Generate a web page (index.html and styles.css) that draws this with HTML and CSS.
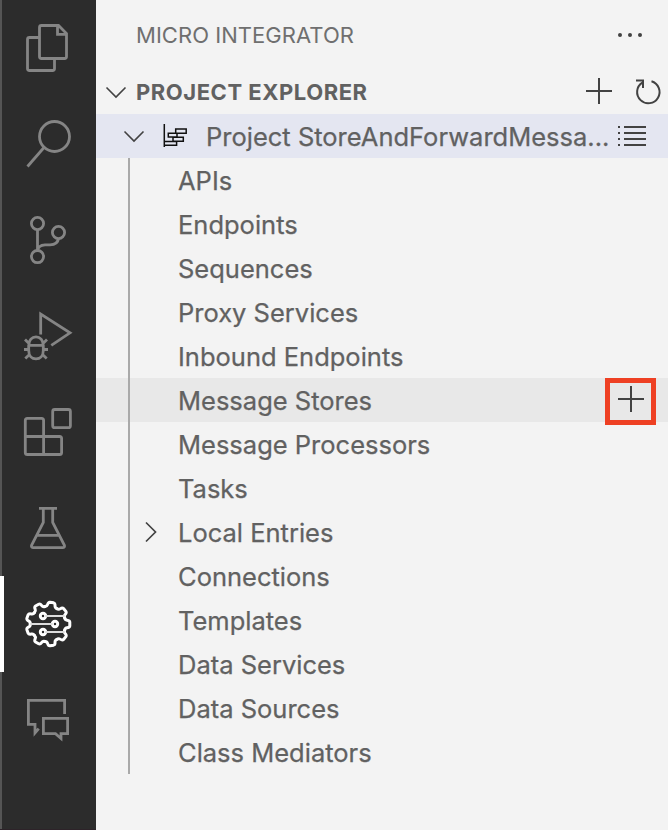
FILE: index.html
```html
<!DOCTYPE html>
<html lang="en">
<head>
<meta charset="utf-8">
<title>Micro Integrator</title>
<link rel="stylesheet" href="styles.css">
</head>
<body>
<div class="app">
  <nav class="activity">
    <div class="tool"><svg viewBox="0 0 96 96"><path d="M41.5 25.5H58.5L66.5 33.5V56.5Q66.5 58.5 64.500 58.5H41.500Q39.500 58.500 39.500 56.500V27.500Q39.500 25.500 41.500 25.500ZM57.500 26V34.300H66M39 37.500H29.500Q27.500 37.500 27.500 39.500V68.500Q27.500 70.500 29.500 70.500H52.500Q54.500 70.500 54.500 68.500V59"/></svg></div>
    <div class="tool"><svg viewBox="0 0 96 96"><circle cx="54.500" cy="40.500" r="15"/><path d="M44 51.500L27.500 70.500"/></svg></div>
    <div class="tool"><svg viewBox="0 0 96 96"><circle cx="37.500" cy="31.500" r="6.100"/><circle cx="58.500" cy="40.500" r="6.100"/><circle cx="37.500" cy="64.600" r="6.100"/><path d="M37.500 38V58.500C38 55 41 53 45 52.800H50C54.500 52.600 58 51 58.500 46.500"/></svg></div>
    <div class="tool"><svg viewBox="0 0 96 96"><path d="M40.700 46.500V26L70 44.800L51.300 57.300M28.700 57.300H43.300M28.700 60.500V57.500C28.700 52 32 48.800 36 48.800S43.300 52 43.300 57.500V62.500C43.300 68 40 70.800 36 70.800S28.700 68 28.700 62.500V57.500M29 55.500L25 51.500M43 55.500L47 51.500M28 61.500H24M44 61.500H48M29.500 66.500L25.300 70.500M42.500 66.500L46.700 70.500"/></svg></div>
    <div class="tool"><svg viewBox="0 0 96 96"><rect x="52.700" y="25.500" width="17.700" height="18.200" rx="2"/><path d="M43.600 52.500V36.500Q43.600 34.400 41.500 34.400H27.400Q25.300 34.400 25.300 36.500V68.400Q25.300 70.500 27.400 70.500H59.500Q61.600 70.500 61.600 68.400V54.600Q61.600 52.500 59.500 52.500H25.300M43.600 52.500V70.500"/></svg></div>
    <div class="tool"><svg viewBox="0 0 96 96"><path d="M39 28.300H57M43.300 28.300V42.300L31.700 65Q30.800 67.600 33.500 67.600H62.500Q65.200 67.600 64.300 65L52.700 42.300V28.300M37 55.400H59"/></svg></div>
    <div class="tool active"><svg viewBox="0 0 96 96">
      <defs><path id="tooth" d="M16.700 -6.080Q17.200 -4 19 -3.800Q21.700 -3.500 21.800 -1.800V1.800Q21.700 3.500 19 3.800Q17.200 4 16.700 6.080"/></defs>
      <g transform="translate(48 48)"><use href="#tooth"/><use href="#tooth" transform="rotate(40)"/><use href="#tooth" transform="rotate(80)"/><use href="#tooth" transform="rotate(120)"/><use href="#tooth" transform="rotate(160)"/><use href="#tooth" transform="rotate(200)"/><use href="#tooth" transform="rotate(240)"/><use href="#tooth" transform="rotate(280)"/><use href="#tooth" transform="rotate(320)"/></g>
      <circle cx="43" cy="40" r="2.700"/><circle cx="55" cy="48" r="2.700"/><circle cx="43" cy="56" r="2.700"/><path class="wire" d="M46 40H64M31 48H52M46 56H64"/></svg></div>
    <div class="tool"><svg viewBox="0 0 96 96"><path d="M64.600 42V28.300H28.400V52.400H35V61L38.700 56.700M43.400 46.400H67.600V61.700H61V66.500L55.500 61.700H43.400Z"/></svg></div>
  </nav>
  <main class="panel">
    <header class="title"><span class="title-text">MICRO INTEGRATOR</span><svg class="dots" viewBox="0 0 28 6"><circle cx="4" cy="3" r="2"/><circle cx="14" cy="3" r="2"/><circle cx="24" cy="3" r="2"/></svg></header>
    <div class="section">
      <svg class="chevron" viewBox="0 0 22 14"><path d="M1.500 2.500L11 12L20.500 2.500"/></svg>
      <span class="section-text">PROJECT EXPLORER</span>
      <svg class="plus" viewBox="0 0 26 26"><path d="M0 13H26M13 0V26"/></svg>
      <svg class="refresh" viewBox="0 0 28 28"><path d="M17.500 3.300A11.200 11.200 0 1 1 8.300 4.600M2 2.500H9V10"/></svg>
    </div>
    <div class="row project">
      <svg class="chevron" viewBox="0 0 22 14"><path d="M1.500 2.500L11 12L20.500 2.500"/></svg>
      <svg class="project-icon" viewBox="0 0 26 26"><path d="M2.300 1V24M2.300 22.300H14.600V18.600H2.300M6.300 10.200H15V14H6.300ZM13.700 6H24.200V10.200H13.700ZM11 14.200H21.300V18.200H11Z"/></svg>
      <span class="project-text">Project StoreAndForwardMessa...</span>
      <svg class="list" viewBox="0 0 28 22"><path d="M6 2H28M6 8H28M6 14H28M6 20H28M0 2H2M0 8H2M0 14H2M0 20H2"/></svg>
    </div>
    <div class="tree">
      <div class="row">APIs</div>
      <div class="row">Endpoints</div>
      <div class="row">Sequences</div>
      <div class="row">Proxy Services</div>
      <div class="row">Inbound Endpoints</div>
      <div class="row hover"><span>Message Stores</span><span class="add"><svg class="plus" viewBox="0 0 26 26"><path d="M0 13H26M13 0V26"/></svg></span></div>
      <div class="row">Message Processors</div>
      <div class="row">Tasks</div>
      <div class="row parent"><svg class="expand" viewBox="0 0 14 22"><path d="M2 1.500L11.500 11L2 20.500"/></svg><span>Local Entries</span></div>
      <div class="row">Connections</div>
      <div class="row">Templates</div>
      <div class="row">Data Services</div>
      <div class="row">Data Sources</div>
      <div class="row">Class Mediators</div>
    </div>
  </main>
</div>
</body>
</html>
```
FILE: styles.css
```css
* { box-sizing: border-box; }
body { margin: 0; font-family: Inter, "Liberation Sans", sans-serif; color: #616161; }
svg { display: block; flex: none; fill: none; stroke: #424242; stroke-width: 2; overflow: visible; }
.app { display: flex; width: 668px; height: 830px; background: #f3f3f3; overflow: hidden; }
.activity { width: 96px; flex: none; background: linear-gradient(to right, #555 2px, #2c2c2c 2px); border-bottom: 1px solid #2d2329; }
.tool { height: 96px; }
.tool svg { width: 96px; height: 96px; stroke: #858585; stroke-width: 2.800; }
.tool.active { background: linear-gradient(to right, #fff 4px, transparent 4px); }
.tool.active svg { stroke: #fff; stroke-width: 3; stroke-linecap: round; }
.tool.active .wire { stroke: #ddd; stroke-width: 2; }
.panel { flex: 1; min-width: 0; }
.title { height: 70px; display: flex; align-items: center; justify-content: space-between; padding: 0 24px 0 40px; }
.title-text { font-size: 22px; color: #6f6f6f; letter-spacing: 0.04px; white-space: nowrap; }
.dots { width: 28px; height: 6px; fill: #424242; stroke: none; }
.section { height: 44px; display: flex; align-items: center; padding: 0 6px 0 9px; }
.chevron { width: 22px; height: 14px; stroke-width: 1.600; }
.section-text { flex: 1; margin-left: 9px; font-size: 22px; font-weight: 700; letter-spacing: 0.540px; white-space: nowrap; }
.section .plus { margin-top: -2px; }
.plus { width: 26px; height: 26px; }
.refresh { width: 28px; height: 28px; margin-left: 22px; }
.row { height: 44px; display: flex; align-items: center; padding-left: 82px; font-size: 25.500px; line-height: 46px; white-space: nowrap; -webkit-text-stroke: 0.250px #616161; }
.project { background: #e4e6f1; padding: 0 22px 0 27px; }
.project-icon { width: 26px; height: 26px; margin-left: 17px; stroke: #111; stroke-width: 1.500; }
.project-text { flex: 1; min-width: 0; margin-left: 18px; padding-top: 1px; }
.list { width: 28px; height: 22px; }
.tree { background: linear-gradient(#a9a9a9, #a9a9a9) 32px 0 / 2px 100% no-repeat; }
.tree .row { padding-top: 2px; }
.tree .hover { padding-top: 0; background: linear-gradient(to right, #e8e8e8 32px, #a9a9a9 32px, #a9a9a9 34px, #e8e8e8 34px); }
.hover > span:first-child { padding-top: 2px; }
.add { display: flex; justify-content: center; width: 51px; height: 47px; margin: 3px 12px 0 auto; padding-top: 3px; border: 5px solid #ee4023; }
.parent { padding-left: 48px; }
.expand { width: 14px; height: 22px; margin-right: 20px; margin-top: -2px; stroke-width: 1.700; }
```
